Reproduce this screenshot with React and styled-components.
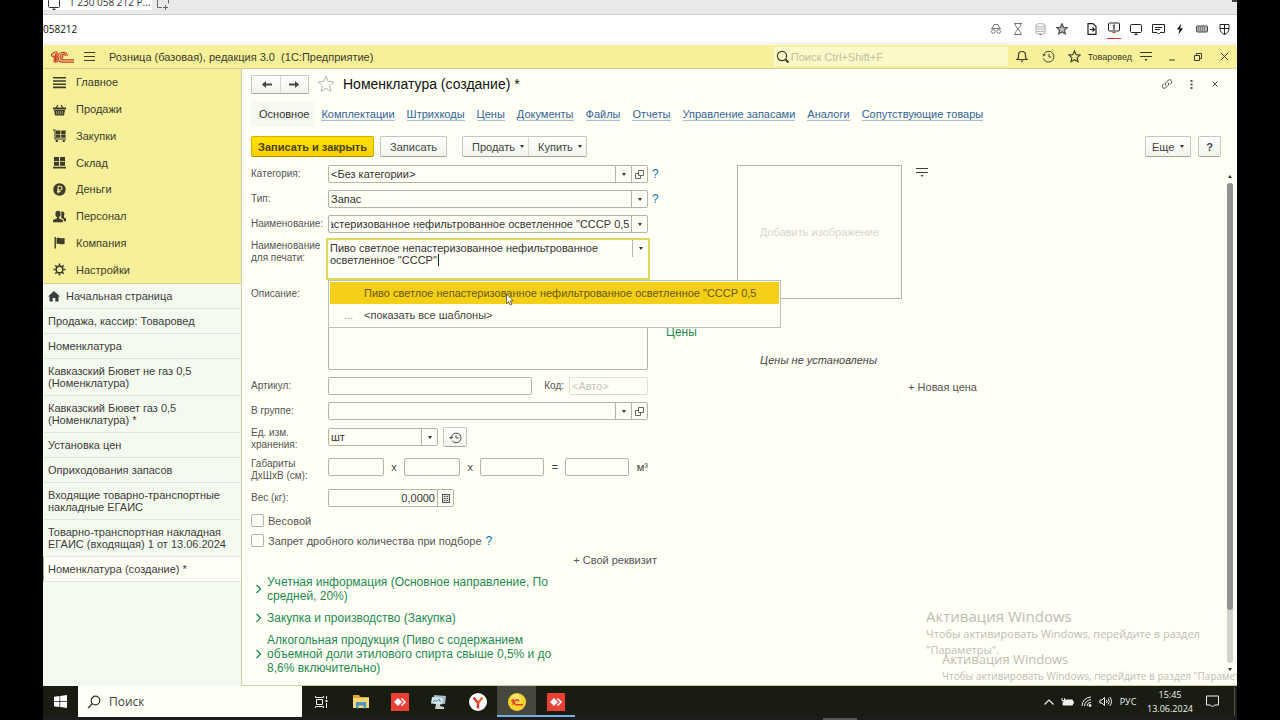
import React, { useEffect, useRef } from "react";
import styled, { createGlobalStyle, css } from "styled-components";

const ui = '"Liberation Sans", Arial, sans-serif';
const win = '"Open Sans", "Noto Sans", sans-serif';
const paper = "#fffff5";
const line = "#b4b4a8";

const Global = createGlobalStyle`
  * { box-sizing: border-box; }
  body { margin: 0; background: #000; font-family: ${ui}; font-size: 11px; line-height: 12px; color: #444; }
  button, input, textarea, select { font: inherit; color: inherit; margin: 0; }
  button { padding: 0; border: 0; background: none; cursor: pointer; }
  a { color: inherit; text-decoration: none; }
  ul { list-style: none; margin: 0; padding: 0; }
  svg { display: block; flex: none; }
`;

/* ---------- shell ---------- */
const Frame = styled.div`
  padding: 0 43px;
  min-height: 100vh;
  display: flex;
`;
const Screen = styled.div`
  flex: 1;
  min-width: 0;
  display: flex;
  flex-direction: column;
  background: ${paper};
  overflow: hidden;
  position: relative;
`;
const TabStrip = styled.div`
  height: 15px;
  background: #e9e9e9;
  border-bottom: 1px solid #d0d0d0;
  display: flex;
  align-items: flex-start;
  overflow: hidden;
  font: 10px/12px ${win};
`;
const SessionTab = styled.button`
  height: 10px;
  width: 109px;
  background: #fff;
  display: flex;
  align-items: flex-end;
  gap: 9px;
  padding: 0 0 0 5px;
  overflow: hidden;
  white-space: nowrap;
  color: #333;
  span { line-height: 16px; }
`;
const NewTab = styled.button`
  margin-left: 5px;
  height: 10px;
  display: flex;
  align-items: flex-end;
`;
const Dash = styled.span`
  width: 5px;
  height: 2px;
  margin-left: auto;
  background: #444;
`;
const AddressBar = styled.div`
  height: 30px;
  background: #fff;
  border-bottom: 3px solid #f5f5f2;
  display: flex;
  align-items: center;
  padding-right: 6px;
  font: 10px/12px ${win};
  color: #111;
`;
const SessionIcons = styled.div`
  display: flex;
  align-items: center;
  gap: 8px;
  margin-left: ${(p) => (p.$first ? "auto" : "16px")};
  color: ${(p) => (p.$first ? "#777" : "#222")};
`;
const IconButton = styled.button`
  width: ${(p) => p.$w || 14}px;
  height: ${(p) => p.$h || 20}px;
  display: flex;
  align-items: center;
  justify-content: center;
  color: inherit;
  border-bottom: ${(p) => (p.$marked ? "1px solid #d9302c" : "0")};
  outline: none;
`;

/* ---------- application header ---------- */
const AppHeader = styled.header`
  height: 24px;
  background: #f6f09b;
  border-bottom: 1px solid #d3cf96;
  display: flex;
  align-items: center;
  padding-left: 8px;
  color: #3e3c28;
`;
const AppTitle = styled.span`
  margin-left: 4px;
  white-space: pre;
`;
const SearchBox = styled.label`
  margin-left: auto;
  width: 234px;
  height: 19px;
  display: flex;
  align-items: center;
  gap: 2px;
  padding-left: 2px;
  background: #fcf9c8;
  input { flex: 1; min-width: 0; border: 0; padding: 0; background: none; outline: none; }
  input::placeholder { color: #c3c09b; opacity: 1; }
`;
const HeaderTools = styled.div`
  display: flex;
  align-items: center;
`;
const UserName = styled.button`
  font-size: 9px;
`;

/* ---------- left side ---------- */
const Workspace = styled.div`
  flex: 1;
  display: flex;
  min-height: 0;
`;
const Side = styled.aside`
  width: 199px;
  flex: none;
  display: flex;
  flex-direction: column;
  background: #f4faee;
  border-right: 1px solid #c9cfa8;
`;
const Sections = styled.nav`
  height: 215px;
  display: grid;
  grid-auto-rows: 1fr;
  background: #f6f09b;
  border-bottom: 1px solid #d3cf96;
`;
const Section = styled.a`
  display: flex;
  align-items: center;
  gap: 10px;
  padding-left: 10px;
  color: #3e3c28;
`;
const OpenItem = styled.a`
  display: flex;
  gap: 6px;
  padding: 6px 4px 6px 5px;
  border-bottom: 1px solid #dfe7d6;
  background: ${(p) => (p.$active ? paper : "transparent")};
  box-shadow: ${(p) => (p.$active ? "inset 1px 0 #8fae8c" : "none")};
  color: #3c3c3c;
  white-space: pre-line;
`;

/* ---------- document ---------- */
const Main = styled.main`
  flex: 1;
  min-width: 0;
  padding: 5px 0 0 9px;
  border-bottom: 1px solid #c9cfa8;
  display: flex;
  flex-direction: column;
`;
const TitleRow = styled.div`
  height: 20px;
  display: flex;
  align-items: center;
  gap: 8px;
  h1 { margin: 0; font-size: 14px; line-height: 18px; font-weight: 400; color: #111; }
`;
const Joined = styled.div`
  display: flex;
  height: ${(p) => p.$h}px;
  margin-left: ${(p) => p.$gap || 0}px;
  border: 1px solid #c3c8bd;
  border-bottom-color: #a2a89c;
  border-radius: 2px;
  background: linear-gradient(#fff, #f2f4ec);
  > * + * { border-left: 1px solid #d4d8cd; }
`;
const HistoryButton = styled.button`
  width: ${(p) => p.$w || 28}px;
  display: flex;
  align-items: center;
  justify-content: center;
`;
const TitleTools = styled.div`
  display: flex;
  align-items: center;
  margin: 0 10px 0 auto;
  color: #555;
`;
const Tabs = styled.nav`
  display: flex;
  margin-top: 7px;
`;
const Tab = styled.a`
  padding: 7px 6px 7px ${(p) => (p.$active ? 8 : 6)}px;
  white-space: nowrap;
  color: ${(p) => (p.$active ? "#333" : "#32639a")};
  background: ${(p) => (p.$active ? "#f6f9f0" : "none")};
  span { border-bottom: 1px solid ${(p) => (p.$active ? "transparent" : "#a9bdd2")}; }
`;
const Commands = styled.div`
  display: flex;
  align-items: center;
  margin-top: 9px;
  padding-right: 16px;
`;
const Command = styled.button`
  height: 21px;
  padding: 0 ${(p) => p.$pad || 9}px;
  margin-left: ${(p) => p.$gap || 0}px;
  border: 1px solid #c3c8bd;
  border-bottom-color: #a2a89c;
  border-radius: 2px;
  background: linear-gradient(#fff, #f2f4ec);
  color: #444;
  display: flex;
  align-items: center;
  gap: 6px;
  white-space: nowrap;
  ${(p) =>
    p.$primary &&
    css`
      background: linear-gradient(#ffe200, #f7cf00);
      border-color: #d2b000;
      border-bottom-color: #a98e00;
      color: #4a4000;
      font-weight: 700;
    `}
`;
const MenuCommand = styled.button`
  padding: 0 4px 0 9px;
  display: flex;
  align-items: center;
  gap: 5px;
`;
const Spacer = styled.div`
  flex: 1;
`;
const Body = styled.div`
  display: flex;
  margin-top: 8px;
  flex: 1;
`;
const Form = styled.form`
  width: 406px;
  flex: none;
  display: flex;
  flex-direction: column;
  gap: 7px;
  padding-bottom: 8px;
`;
const Row = styled.div`
  display: grid;
  grid-template-columns: 77px 320px 1fr;
  align-items: start;
`;
const Label = styled.label`
  padding: ${(p) => (p.$two ? 0 : 3)}px 0;
  color: #555;
  font-size: 10px;
  white-space: pre-line;
`;
const Line = styled.div`
  display: flex;
  align-items: center;
  justify-content: ${(p) => (p.$spread ? "space-between" : "flex-start")};
  gap: 5px;
`;
const boxed = css`
  border: 1px solid ${line};
  border-radius: 2px;
  background: ${paper};
`;
const Box = styled.div`
  ${boxed}
  height: 18px;
  width: ${(p) => (p.$w ? p.$w + "px" : "100%")};
  display: flex;
  color: #333;
  overflow: hidden;
  input, select {
    flex: 1;
    min-width: 0;
    width: 0;
    border: 0;
    padding: 0 2px;
    background: none;
    outline: none;
    appearance: none;
    text-align: ${(p) => (p.$right ? "right" : "left")};
  }
`;
const Plain = styled.input`
  ${boxed}
  height: 18px;
  width: ${(p) => p.$w}px;
  padding: 0 2px;
  &:disabled { border-color: #deded4; }
  &::placeholder { color: #c4c4ba; opacity: 1; }
`;
const Cell = styled.button`
  width: 16px;
  border-left: 1px solid ${line};
  display: flex;
  align-items: center;
  justify-content: center;
`;
const Caret = styled.span`
  width: 0;
  height: 0;
  border: 2px solid transparent;
  border-top: 3px solid #333;
  border-bottom: 0;
`;
const Help = styled.button`
  justify-self: start;
  height: 18px;
  padding-left: 4px;
  color: #0a74ad;
  font-size: 12px;
`;
const PrintName = styled.div`
  position: relative;
  height: 38px;
  outline: 2px solid #dcd858;
  background: ${paper};
  display: flex;
  align-items: flex-start;
  textarea {
    flex: 1;
    height: 38px;
    border: 0;
    padding: 2px;
    background: none;
    resize: none;
    outline: none;
    overflow: hidden;
    color: #333;
  }
  > button { height: 17px; }
`;
const TextCursor = styled.span`
  position: absolute;
  left: 110px;
  top: 14px;
  width: 1px;
  height: 12px;
  background: #222;
`;
const Suggest = styled.ul`
  position: absolute;
  z-index: 2;
  left: 0;
  top: 40px;
  width: 453px;
  padding: 1px;
  border: 1px solid #c0c0b4;
  background: ${paper};
`;
const Suggestion = styled.button`
  width: 100%;
  height: 22px;
  display: grid;
  grid-template-columns: 34px 1fr;
  align-items: center;
  text-align: left;
  background: ${(p) => (p.$active ? "#f4cf17" : "none")};
  color: ${(p) => (p.$active ? "#6b5800" : "#444")};
  span { padding-left: 14px; color: #888; }
`;
const Pointer = styled.svg`
  position: absolute;
  left: 177px;
  top: 12px;
`;
const Notes = styled.textarea`
  ${boxed}
  display: block;
  width: 100%;
  height: 85px;
  resize: none;
`;
const Check = styled.div`
  display: flex;
  align-items: center;
  height: 13px;
  color: #555;
  input {
    appearance: none;
    width: 13px;
    height: 13px;
    margin: 0 4px 0 0;
    ${boxed}
  }
`;
const SoftLink = styled.button`
  align-self: flex-end;
  color: #555;
`;
const Groups = styled.div`
  display: flex;
  flex-direction: column;
  gap: 8px;
  margin-top: 2px;
`;
const Group = styled.button`
  width: 316px;
  display: flex;
  align-items: center;
  gap: 4px;
  padding-left: 4px;
  text-align: left;
  white-space: pre-line;
  font-size: 12px;
  line-height: 14px;
  color: #1d8a53;
`;
const Pictures = styled.section`
  width: 320px;
  padding-left: 9px;
  display: flex;
  flex-direction: column;
`;
const PictureRow = styled.div`
  display: flex;
  align-items: flex-start;
  gap: 13px;
  padding-left: 71px;
`;
const AddPicture = styled.button`
  ${boxed}
  border-radius: 0;
  width: 165px;
  height: 134px;
  color: #d6d6cc;
`;
const PriceTitle = styled.h2`
  margin: 26px 0 0;
  font-size: 12px;
  line-height: 14px;
  font-weight: 400;
  color: #1d8a53;
`;
const NoPrices = styled.p`
  margin: 15px 6px 15px 0;
  text-align: center;
  font-style: italic;
  color: #444;
`;
const Scrollbar = styled.div`
  width: 8px;
  margin: 10px 3px 14px auto;
  display: flex;
  flex-direction: column;
  align-items: center;
  gap: 5px;
`;
const Track = styled.div`
  flex: 1;
  width: 6px;
  border-radius: 3px;
  background: #d3d3cd;
  &::before {
    content: "";
    display: block;
    height: 89%;
    border-radius: 3px;
    background: #929292;
  }
`;
const Arrow = styled(Caret)`
  transform: ${(p) => (p.$up ? "rotate(180deg)" : "none")};
`;

/* ---------- activation notices ---------- */
const Notice = styled.div`
  position: absolute;
  left: calc(100% - ${(p) => p.$x}px);
  bottom: ${(p) => p.$y}px;
  white-space: pre;
  pointer-events: none;
  font: ${(p) => p.$text}px/${(p) => p.$lh}px ${win};
  color: #bdbdb4;
  strong { display: block; font-weight: 400; font-size: ${(p) => p.$size}px; line-height: 20px; }
`;

/* ---------- taskbar ---------- */
const Taskbar = styled.footer`
  height: 31px;
  background: #191c11;
  color: #f2f2ec;
  display: flex;
  font-family: ${win};
`;
const TaskButton = styled.button`
  width: ${(p) => p.$w || 39}px;
  display: flex;
  align-items: center;
  justify-content: center;
  background: ${(p) => (p.$active ? "#45483e" : "none")};
  box-shadow: ${(p) => (p.$open ? "inset 0 -2px #76b0dd" : "none")};
`;
const TaskSearch = styled.label`
  width: 224px;
  background: ${paper};
  color: #333;
  display: flex;
  align-items: center;
  gap: 8px;
  padding-left: 9px;
  font-size: 12px;
  input { flex: 1; min-width: 0; border: 0; padding: 0; background: none; outline: none; }
  input::placeholder { color: #444; opacity: 1; }
`;
const Tray = styled.div`
  margin-left: auto;
  display: flex;
  align-items: center;
  padding-right: 2px;
`;
const Language = styled.button`
  font-size: 9px;
  width: 26px;
`;
const Clock = styled.button`
  width: 58px;
  font-size: 9px;
  line-height: 14px;
  white-space: pre-line;
  text-align: center;
`;
const TrayEnd = styled.span`
  width: 1px;
  height: 29px;
  margin-left: 9px;
  background: #55584d;
`;
const Bezel = styled.div`
  height: 3px;
  background: #1d1c21;
  display: flex;
  justify-content: center;
  align-items: flex-end;
  padding-left: 400px;
  span { width: 34px; height: 2px; background: #55555a; }
`;

/* ---------- drawings ---------- */
const Ico = ({ w = 14, h, box, sw = 1, fill = "none", children, ...rest }) => (
  <svg width={w} height={h || w} viewBox={box || `0 0 ${w} ${h || w}`} fill={fill} stroke="currentColor" strokeWidth={sw} aria-hidden="true" {...rest}>
    {children}
  </svg>
);
const starPath = "M7 1l1.8 4 4.2.4-3.2 2.9 1 4.3L7 10.4l-3.8 2.2 1-4.3L1 5.4 5.2 5z";
const Star = (p) => <Ico {...p} box="0 0 14 14"><path d={starPath} /></Ico>;
const Monitor = (p) => <Ico w={12} {...p} box="0 0 12 12"><rect x=".5" y="1.5" width="11" height="8" rx="1" /><path d="M4.5 11.5h3M6 9.5v2" /></Ico>;
const MenuDown = () => <Ico w={14} h={11} sw={1.2}><path d="M1 1.5h12M1 5.5h12" /><path d="M5.5 8h3L7 10z" fill="currentColor" stroke="none" /></Ico>;
const History = () => (
  <Ico w={13} box="0 0 14 14"><path d="M2.2 4A5.8 5.8 0 1 1 1.5 9M7.5 4v3.5H10" /><path d="M.6 4.2l3.6.6L1.6 7z" fill="currentColor" stroke="none" /></Ico>
);
const UnitHistory = () => (
  <Ico w={13} box="0 0 14 14"><path d="M2.6 6.5A5.2 5.2 0 1 1 3.5 10.500M7.500 4.500v3H10.500" /><path d="M0 6.500h4.500L2.300 9z" fill="currentColor" stroke="none" /></Ico>
);
const Magnifier = () => <Ico w={13} sw={1.2}><circle cx="6" cy="6" r="4.6" /><path d="M9.5 9.5l3 3" strokeWidth="2" /></Ico>;
const OpenIcon = () => <Ico w={9} color="#666"><path d="M3.5.5h5v5h-5zM3 3.5H.5v5h5V6" /></Ico>;
const Chevron = () => <Ico w={8} h={10} sw={1.3}><path d="M1.5 1l4 4-4 4" /></Ico>;
const AnyDesk = () => (
  <svg width="18" height="18" viewBox="0 0 18 18" aria-hidden="true"><path fill="#ee3f35" d="M0 0h18v18H0z" /><path fill="#fff" d="M7 5l4 4-4 4-4-4z" /><path d="M10.5 5.5L14 9l-3.5 3.5" fill="none" stroke="#fff" strokeWidth="1.6" /></svg>
);
const OneC = () => (
  <svg width="23" height="12" viewBox="0 0 23 12" fill="none" stroke="#cf3a22" strokeWidth="1.2" aria-hidden="true">
    <path d="M.6 5.300V3.600L3.400 1H6v10.400M3.200 11.400V4.800M3.200 4.800L1 5.800M4.600 2.500v9" />
    <path d="M16.600 4.800A4.900 4.900 0 1 0 12 11.200H23M14.600 5A2.800 2.800 0 1 0 12 8.800H23" />
    <path d="M12.800 5.200a1 1 0 1 0-.5 1.600" />
  </svg>
);

const sections = [
  ["Главное", <path key="a" d="M0 1h13v1.6H0zM0 4.2h13v1.6H0zM0 7.4h13V9H0zM0 10.6h13v1.6H0z" />],
  ["Продажи", <g key="a"><path d="M0 4.5h13v2H0zM1 7h11l-1 5.5H2z" /><path d="M3 5l2-3M10 5L8 2" stroke="currentColor" strokeWidth="1.2" /><path d="M3.7 8v3.4M5.6 8v3.4M7.4 8v3.4M9.3 8v3.4" stroke="#f6f09b" strokeWidth=".5" /></g>],
  ["Закупки", <g key="a"><path d="M3 1.5h4.4v3.4H3zM8.2 1.5h4.4v3.4H8.2zM3 5.6h4.4v3.2H3zM8.2 5.6h4.4v3.2H8.2z" /><path d="M0 1h2v9h11" fill="none" stroke="currentColor" strokeWidth="1.1" /><circle cx="3.8" cy="12" r="1.2" /><circle cx="10.8" cy="12" r="1.2" /></g>],
  ["Склад", <path key="a" d="M1 1h5v4H1zM7 1h5v4H7zM1 5.8h5v4H1zM7 5.8h5v4H7zM0 10.8h13v1.7H0z" />],
  ["Деньги", <g key="a"><circle cx="6.5" cy="6.5" r="6.2" /><path d="M5.2 10.4V3.3h2a1.8 1.8 0 0 1 0 3.7H4M4 8.6h3.6" fill="none" stroke="#f6f09b" strokeWidth="1.1" /></g>],
  ["Персонал", <g key="a"><ellipse cx="5" cy="4" rx="2.6" ry="3.2" /><path d="M4 6h2v2.3l3.8 1.6v2.3H0V9.9l4-1.6z" /><path d="M8.4 1.6c2.8-.6 3.6 1.6 2.6 4.2v1.6l2 1.2v2.6h-2.3V9.2L8.2 8z" /></g>],
  ["Компания", <path key="a" d="M1.5 1h1.4v11.5H1.5zM3.6 2c2.500-1.200 3.500 1.200 8 0v6c-4.500 1.200-5.500-1.200-8 0z" />],
  ["Настройки", <g key="a" fill="none" stroke="currentColor"><circle cx="6.5" cy="6.5" r="3.4" strokeWidth="1.6" /><path strokeWidth="1.6" d="M6.5.5v2M6.5 10.5v2M.5 6.5h2M10.5 6.5h2M2.3 2.3l1.4 1.4M9.3 9.3l1.4 1.4M10.7 2.3L9.3 3.7M3.7 9.3l-1.4 1.4" /></g>],
];

const openItems = [
  "Продажа, кассир: Товаровед",
  "Номенклатура",
  "Кавказский Бювет не газ 0,5\n(Номенклатура)",
  "Кавказский Бювет газ 0,5\n(Номенклатура) *",
  "Установка цен",
  "Оприходования запасов",
  "Входящие товарно-транспортные\nнакладные ЕГАИС",
  "Товарно-транспортная накладная\nЕГАИС (входящая) 1 от 13.06.2024",
  "Номенклатура (создание) *",
];

const tabs = ["Основное", "Комплектации", "Штрихкоды", "Цены", "Документы", "Файлы", "Отчеты", "Управление запасами", "Аналоги", "Сопутствующие товары"];

const groups = [
  "Учетная информация (Основное направление, По\nсредней, 20%)",
  "Закупка и производство (Закупка)",
  "Алкогольная продукция (Пиво с содержанием\nобъемной доли этилового спирта свыше 0,5% и до\n8,6% включительно)",
];

const fullName = 'Пиво светлое непастеризованное нефильтрованное осветленное "СССР 0,5';

function Choice({ id, value, w, open }) {
  return (
    <Box $w={w}>
      <select id={id} defaultValue={value}>
        <option>{value}</option>
      </select>
      <Cell type="button" aria-label="Выбрать"><Caret /></Cell>
      {open && <Cell type="button" aria-label="Открыть"><OpenIcon /></Cell>}
    </Box>
  );
}

function NameField() {
  const ref = useRef(null);
  useEffect(() => {
    ref.current.scrollLeft = ref.current.scrollWidth;
  }, []);
  return (
    <Box>
      <input id="name" ref={ref} defaultValue={fullName} />
      <Cell type="button" aria-label="Выбрать"><Caret /></Cell>
    </Box>
  );
}

export default function App() {
  return (
    <Frame>
      <Global />
      <Screen>
        <TabStrip>
          <SessionTab><Monitor /><span>1 230 058 212 P...</span></SessionTab>
          <NewTab aria-label="Новая вкладка"><Ico w={12} color="#666"><path d="M3 .5H.5v9H5M10 .5h1.5v5M6 9.5h5M8.5 7v5" /></Ico></NewTab>
          <Dash />
        </TabStrip>
        <AddressBar>
          058212
          <SessionIcons $first>
            <IconButton aria-label="Приватность"><Ico w={12}><path d="M1 5.5h10M2.5 5L4 1.5h4L9.5 5" /><circle cx="3.3" cy="8.5" r="1.8" /><circle cx="8.7" cy="8.5" r="1.8" /></Ico></IconButton>
            <IconButton aria-label="Ожидание"><Ico w={10} h={12}><path d="M1 .5h8M1 11.5h8M2 .5c0 3 2.5 4 2.5 5.5S2 8.5 2 11.5M8 .5c0 3-2.5 4-2.5 5.5S8 8.5 8 11.5" /></Ico></IconButton>
            <IconButton aria-label="Данные"><Ico w={11} h={12} color="#aaa"><ellipse cx="5.5" cy="2.3" rx="4.5" ry="1.7" /><path d="M1 2.5v7.5c1 1.5 8 1.5 9 0V2.5M1 5c1 1.5 8 1.5 9 0M1 7.5c1 1.5 8 1.5 9 0" /><path d="M4.5 11.5h2" stroke="#d9302c" /></Ico></IconButton>
            <IconButton aria-label="Избранное"><Star w={12} sw={1.5} fill="#bbb" color="#555" /></IconButton>
          </SessionIcons>
          <SessionIcons>
            <IconButton aria-label="Передать файл"><Ico w={10} h={12} sw={1.2}><path d="M6 .6H1v10.8h8V3.5zM3 6.5h4M5.5 4.5l2 2-2 2" /></Ico></IconButton>
            <IconButton $marked aria-label="Экран 1"><Ico w={12}><rect x=".5" y="1" width="11" height="8" rx="1" /><path d="M5 4l1-.8V8" strokeWidth="1.2" /><path d="M4.5 10.5h3" stroke="#d9302c" /></Ico></IconButton>
            <IconButton aria-label="Экран"><Monitor /></IconButton>
            <IconButton aria-label="Чат"><Ico w={13} h={12}><path d="M.5 1.5h12v8H8L6.5 11 5 9.5H.5zM3 4.5h7M3 6.5h5" /></Ico></IconButton>
            <IconButton aria-label="Действия"><Ico w={8} h={12}><path d="M5 .5L1 6.5h2.5L2.5 11.5 7 5.2H4.3z" fill="#111" stroke="none" /></Ico></IconButton>
            <IconButton aria-label="Клавиатура"><Ico w={12} h={8} color="#444"><rect x=".5" y="1" width="11" height="6" rx="1" fill="#bbb" /><path d="M2 3h8M2 5h8" strokeDasharray="1 1" /></Ico></IconButton>
            <IconButton aria-label="Права"><Ico w={11} h={12}><path d="M1 1.5h9v4c0 3-2 5-4.5 6-2.5-1-4.5-3-4.5-6zM5.5 1.5v10M1 5.5h9" /></Ico></IconButton>
          </SessionIcons>
        </AddressBar>

        <AppHeader>
          <OneC />
          <IconButton $w={31} aria-label="Меню"><Ico w={11} h={10}><path d="M0 .5h11M0 4.5h11M0 8.5h11" /></Ico></IconButton>
          <AppTitle>{"Розница (базовая), редакция 3.0  (1С:Предприятие)"}</AppTitle>
          <SearchBox>
            <Magnifier />
            <input aria-label="Поиск" placeholder="Поиск Ctrl+Shift+F" />
          </SearchBox>
          <HeaderTools>
            <IconButton $w={28} aria-label="Уведомления"><Ico w={12} h={13} sw={1.2}><path d="M1 9.5h10L9.5 7.5V5A3.5 3.5 0 0 0 6 1.5 3.5 3.5 0 0 0 2.5 5v2.5z" /><path d="M4.5 10.5h3L6 12.5z" fill="currentColor" stroke="none" /></Ico></IconButton>
            <IconButton $w={26} aria-label="История"><History /></IconButton>
            <IconButton $w={26} aria-label="Избранное"><Star w={13} sw={1.2} /></IconButton>
            <UserName>Товаровед</UserName>
            <IconButton $w={27} aria-label="Настройки"><MenuDown /></IconButton>
            <IconButton $w={26} aria-label="Свернуть"><Ico w={8}><path d="M1 7h6" /></Ico></IconButton>
            <IconButton $w={26} aria-label="Восстановить"><Ico w={8}><path d="M.5 2.5h5v5h-5zM2.5 2V.5h5v5H6" /></Ico></IconButton>
            <IconButton $w={26} aria-label="Закрыть"><Ico w={9}><path d="M1 1l7 7M8 1L1 8" /></Ico></IconButton>
          </HeaderTools>
        </AppHeader>

        <Workspace>
          <Side>
            <Sections>
              {sections.map(([name, art]) => (
                <Section href="#" key={name}>
                  <Ico w={13} fill="currentColor" stroke="none">{art}</Ico>
                  {name}
                </Section>
              ))}
            </Sections>
            <OpenItem href="#">
              <Ico w={12} fill="currentColor" stroke="none"><path d="M6 1l6 5.5h-1.5V11.5H7.3V8H4.7v3.5H1.5V6.5H0z" /></Ico>
              Начальная страница
            </OpenItem>
            {openItems.map((t, i) => (
              <OpenItem href="#" key={t} $active={i === openItems.length - 1}>{t}</OpenItem>
            ))}
          </Side>

          <Main>
            <TitleRow>
              <Joined $h={19}>
                <HistoryButton aria-label="Назад"><Ico w={11} h={9} sw={2}><path d="M11 4.5H2" /><path d="M5 1L1 4.5 5 8z" fill="currentColor" stroke="none" /></Ico></HistoryButton>
                <HistoryButton aria-label="Вперед"><Ico w={11} h={9} sw={2}><path d="M0 4.5h9" /><path d="M6 1l4 3.5L6 8z" fill="currentColor" stroke="none" /></Ico></HistoryButton>
              </Joined>
              <Star w={18} sw={0.7} color="#aaa" />
              <h1>Номенклатура (создание) *</h1>
              <TitleTools>
                <IconButton $w={24} aria-label="Ссылка"><Ico w={12}><path d="M5 7.5a2.2 2.2 0 0 1 0-3L7.5 2a2.2 2.2 0 0 1 3 3L9 6.5M7 4.5a2.2 2.2 0 0 1 0 3L4.5 10a2.2 2.2 0 0 1-3-3L3 5.5" /></Ico></IconButton>
                <IconButton $w={24} aria-label="Еще"><Ico w={3} h={9} fill="currentColor" stroke="none"><path d="M.5 0h2v2h-2zM.5 3.5h2v2h-2zM.5 7h2v2h-2z" /></Ico></IconButton>
                <IconButton $w={24} aria-label="Закрыть"><Ico w={6}><path d="M.5.5l5 5M5.5.5l-5 5" /></Ico></IconButton>
              </TitleTools>
            </TitleRow>

            <Tabs>
              {tabs.map((t, i) => (
                <Tab href="#" key={t} $active={i === 0}><span>{t}</span></Tab>
              ))}
            </Tabs>

            <Commands>
              <Command $primary $pad={6}>Записать и закрыть</Command>
              <Command $gap={6}>Записать</Command>
              <Joined $h={21} $gap={15}>
                <MenuCommand>Продать <Caret /></MenuCommand>
                <MenuCommand>Купить <Caret /></MenuCommand>
              </Joined>
              <Spacer />
              <Command $pad={6}>Еще <Caret /></Command>
              <Command $gap={7} $pad={7}><b>?</b></Command>
            </Commands>

            <Body>
              <Form onSubmit={(e) => e.preventDefault()}>
                <Row>
                  <Label htmlFor="category">Категория:</Label>
                  <Choice id="category" value="<Без категории>" open />
                  <Help type="button">?</Help>
                </Row>
                <Row>
                  <Label htmlFor="kind">Тип:</Label>
                  <Choice id="kind" value="Запас" />
                  <Help type="button">?</Help>
                </Row>
                <Row>
                  <Label htmlFor="name">Наименование:</Label>
                  <NameField />
                </Row>
                <Row>
                  <Label $two htmlFor="print">{"Наименование\nдля печати:"}</Label>
                  <PrintName>
                    <textarea id="print" defaultValue={'Пиво светлое непастеризованное нефильтрованное осветленное "СССР"'} />
                    <TextCursor />
                    <Cell type="button" aria-label="Выбрать"><Caret /></Cell>
                    <Suggest>
                      <li><Suggestion type="button" $active><span />{fullName}</Suggestion></li>
                      <li><Suggestion type="button"><span>...</span>{"<показать все шаблоны>"}</Suggestion></li>
                      <Pointer width="8" height="13" viewBox="0 0 8 13" aria-hidden="true">
                        <path d="M.5.8v9.7l2.2-2 1.6 3.6 1.6-.7-1.6-3.5h3z" fill="#fff" stroke="#444" strokeWidth=".8" />
                      </Pointer>
                    </Suggest>
                  </PrintName>
                </Row>
                <Row>
                  <Label htmlFor="notes">Описание:</Label>
                  <Notes id="notes" />
                </Row>
                <Row>
                  <Label htmlFor="article">Артикул:</Label>
                  <Line $spread>
                    <Plain id="article" $w={204} />
                    <Line>
                      <Label htmlFor="code">Код:</Label>
                      <Plain id="code" $w={79} placeholder="<Авто>" disabled />
                    </Line>
                  </Line>
                </Row>
                <Row>
                  <Label htmlFor="group">В группе:</Label>
                  <Choice id="group" value="" open />
                </Row>
                <Row>
                  <Label $two htmlFor="unit">{"Ед. изм.\nхранения:"}</Label>
                  <Line>
                    <Choice id="unit" value="шт" w={110} />
                    <Joined $h={20}>
                      <HistoryButton type="button" $w={22} aria-label="История единиц"><UnitHistory /></HistoryButton>
                    </Joined>
                  </Line>
                </Row>
                <Row>
                  <Label $two htmlFor="length">{"Габариты\nДхШхВ (см):"}</Label>
                  <Line $spread>
                    <Plain id="length" $w={56} />x
                    <Plain aria-label="Ширина" $w={56} />x
                    <Plain aria-label="Высота" $w={64} />=
                    <Plain aria-label="Объем" $w={64} />м³
                  </Line>
                </Row>
                <Row>
                  <Label htmlFor="weight">Вес (кг):</Label>
                  <Box $w={126} $right>
                    <input id="weight" defaultValue="0,0000" />
                    <Cell type="button" aria-label="Калькулятор"><Ico w={8} h={9} color="#555"><rect x=".5" y=".5" width="7" height="8" fill="#ddd" /><path d="M2 2.5h4M2 4.5h4M2 6.5h4" strokeDasharray="1 .5" /></Ico></Cell>
                  </Box>
                </Row>
                <Check><input type="checkbox" id="weighted" /><label htmlFor="weighted">Весовой</label></Check>
                <Check><input type="checkbox" id="nofrac" /><label htmlFor="nofrac">Запрет дробного количества при подборе</label><Help type="button">?</Help></Check>
                <SoftLink type="button">+ Свой реквизит</SoftLink>
                <Groups>
                  {groups.map((g) => (
                    <Group type="button" key={g} aria-expanded="false"><Chevron />{g}</Group>
                  ))}
                </Groups>
              </Form>

              <Pictures>
                <PictureRow>
                  <AddPicture>Добавить изображение</AddPicture>
                  <IconButton $h={14} aria-label="Команды изображения"><MenuDown /></IconButton>
                </PictureRow>
                <PriceTitle>Цены</PriceTitle>
                <NoPrices>Цены не установлены</NoPrices>
                <SoftLink>+ Новая цена</SoftLink>
              </Pictures>

              <Scrollbar><Arrow $up /><Track /><Arrow /></Scrollbar>
            </Body>
          </Main>
        </Workspace>

        <Notice $x={311} $y={62} $size={15} $text={11} $lh={16}><strong>Активация Windows</strong>{'Чтобы активировать Windows, перейдите в раздел\n"Параметры".'}</Notice>
        <Notice $x={295} $y={37} $size={13} $text={10} $lh={14}><strong>Активация Windows</strong>{'Чтобы активировать Windows, перейдите в раздел "Параметры".'}</Notice>

        <Taskbar>
          <TaskButton $w={35} aria-label="Пуск"><svg width="13" height="13" viewBox="0 0 13 13" fill="#fff" aria-hidden="true"><path d="M0 1.8l5.5-.8v5.2H0zM6.2.9L13 0v6.2H6.2zM0 6.9h5.5V12L0 11.2zM6.2 6.9H13V13l-6.8-.9z" /></svg></TaskButton>
          <TaskSearch>
            <Ico w={14} sw={1.2}><circle cx="8.5" cy="5.5" r="4.3" /><path d="M5.5 8.5L1 13" /></Ico>
            <input aria-label="Поиск в Windows" placeholder="Поиск" />
          </TaskSearch>
          <TaskButton aria-label="Представление задач"><Ico w={13} h={12}><path d="M1.5 3.5h6v5h-6zM.5 0v1.5h8V0M.5 12v-1.5h8V12M11.5 0v3M11.5 7v5" /><path d="M10.5 4h2v2h-2z" fill="currentColor" stroke="none" /></Ico></TaskButton>
          <TaskButton aria-label="Проводник"><svg width="16" height="15" viewBox="0 0 16 15" aria-hidden="true"><path fill="#e0a52e" d="M0 1h6l1.5 2H16v11H0z" /><path fill="#f9d873" d="M0 4h16v10H0z" /><path fill="#4a94c4" d="M3 8h10v6.5h-2.5v-3h-5v3H3z" /></svg></TaskButton>
          <TaskButton aria-label="AnyDesk"><AnyDesk /></TaskButton>
          <TaskButton aria-label="Диспетчер"><svg width="17" height="15" viewBox="0 0 17 15" aria-hidden="true"><path fill="#a9bcc4" d="M4 1l12 1-1 8-12-1z" /><path fill="#d7e7ec" d="M2 3l11 1-1 6.5L1 9.500z" /><path d="M3 8l2-2 1.500 1.500L9 5l1.500 3" stroke="#3b8bb0" fill="none" /><path fill="#ccd4d2" d="M6 10h4v2l4 1v2H5z" /></svg></TaskButton>
          <TaskButton aria-label="Яндекс Браузер"><svg width="18" height="18" viewBox="0 0 18 18" aria-hidden="true"><circle cx="9" cy="9" r="9" fill="#fff" /><path d="M4.5 4.5L9 10v5.5" stroke="#e8332c" strokeWidth="2.4" fill="none" /><path d="M13.5 4.5L9 10" stroke="#f0662c" strokeWidth="2.4" /></svg></TaskButton>
          <TaskButton $active $open aria-label="1С:Предприятие"><svg width="18" height="18" viewBox="0 0 18 18" aria-hidden="true"><circle cx="9" cy="9" r="9" fill="#f8d22c" /><circle cx="8" cy="6" r="5" fill="#fde56a" /><g transform="translate(3 6) scale(.52)" fill="none" stroke="#d8401f" strokeWidth="2.6"><path d="M.5 4.2L4 1.4v9.8M15.8 4.6A4.8 4.8 0 1 0 11.6 11H23M13 6H11" /></g></svg></TaskButton>
          <TaskButton $open aria-label="AnyDesk, сеанс"><AnyDesk /></TaskButton>
          <Tray>
            <IconButton $w={19} aria-label="Скрытые значки"><Ico w={10} h={6} sw={1.2}><path d="M.5 5.5L5 1l4.5 4.5" /></Ico></IconButton>
            <IconButton $w={19} aria-label="Батарея"><Ico w={13} h={8}><path d="M3 2h8.5v5H2V4" fill="#eee" /><path d="M12.5 3.5v2M1 0v2.5h2.5V0" /></Ico></IconButton>
            <IconButton $w={19} aria-label="Сеть"><Ico w={11}><path d="M1 10A9 9 0 0 1 10 1M3.5 10A6.5 6.5 0 0 1 10 3.7M6 10A4 4 0 0 1 10 6.3" /><circle cx="9" cy="9.5" r="1" fill="currentColor" /></Ico></IconButton>
            <IconButton $w={19} aria-label="Звук"><Ico w={13} h={11}><path d="M1 4h2l2.5-2.5v8L3 7H1zM7.5 4a2.5 2.5 0 0 1 0 3M9 2.5a4.5 4.5 0 0 1 0 6M10.7 1a6.5 6.5 0 0 1 0 9" /></Ico></IconButton>
            <Language>РУС</Language>
            <Clock>{"15:45\n13.06.2024"}</Clock>
            <IconButton $w={26} aria-label="Центр уведомлений"><Ico w={13} h={13}><path d="M.5 1h12v9H8.5l-2 2-2-2h-4z" /></Ico></IconButton>
            <TrayEnd />
          </Tray>
        </Taskbar>
        <Bezel><span /></Bezel>
      </Screen>
    </Frame>
  );
}
